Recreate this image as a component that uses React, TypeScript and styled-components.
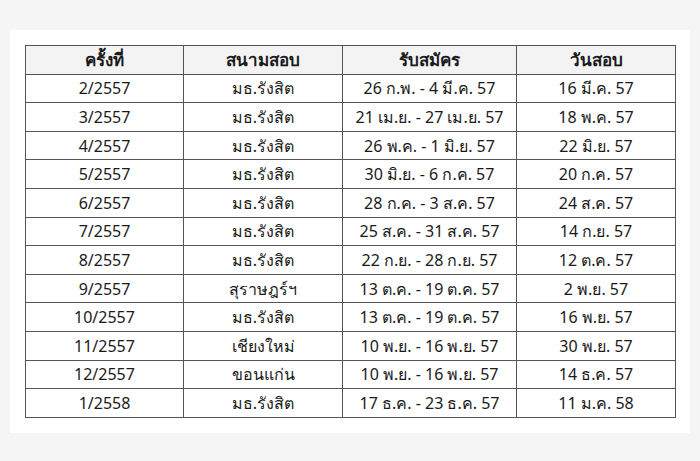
import React from 'react';
import styled, { createGlobalStyle } from 'styled-components';

const GlobalStyle = createGlobalStyle`
  html, body {
    margin: 0;
    padding: 0;
    background: #f5f5f5;
  }
  body {
    font-family: "Noto Sans", "DejaVu Sans", sans-serif;
  }
`;

const rows = [
  ['2/2557', 'มธ.รังสิต', '26 ก.พ. - 4 มี.ค. 57', '16 มี.ค. 57'],
  ['3/2557', 'มธ.รังสิต', '21 เม.ย. - 27 เม.ย. 57', '18 พ.ค. 57'],
  ['4/2557', 'มธ.รังสิต', '26 พ.ค. - 1 มิ.ย. 57', '22 มิ.ย. 57'],
  ['5/2557', 'มธ.รังสิต', '30 มิ.ย. - 6 ก.ค. 57', '20 ก.ค. 57'],
  ['6/2557', 'มธ.รังสิต', '28 ก.ค. - 3 ส.ค. 57', '24 ส.ค. 57'],
  ['7/2557', 'มธ.รังสิต', '25 ส.ค. - 31 ส.ค. 57', '14 ก.ย. 57'],
  ['8/2557', 'มธ.รังสิต', '22 ก.ย. - 28 ก.ย. 57', '12 ต.ค. 57'],
  ['9/2557', 'สุราษฎร์ฯ', '13 ต.ค. - 19 ต.ค. 57', '2 พ.ย. 57'],
  ['10/2557', 'มธ.รังสิต', '13 ต.ค. - 19 ต.ค. 57', '16 พ.ย. 57'],
  ['11/2557', 'เชียงใหม่', '10 พ.ย. - 16 พ.ย. 57', '30 พ.ย. 57'],
  ['12/2557', 'ขอนแก่น', '10 พ.ย. - 16 พ.ย. 57', '14 ธ.ค. 57'],
  ['1/2558', 'มธ.รังสิต', '17 ธ.ค. - 23 ธ.ค. 57', '11 ม.ค. 58'],
];

const headers = ['ครั้งที่', 'สนามสอบ', 'รับสมัคร', 'วันสอบ'];
const colWidths = [158, 159, 174, 159];

export default function App() {
  return (
    <>
      <GlobalStyle />
      <S.Page>
        <S.Panel>
          <S.Table>
            <colgroup>
              {colWidths.map((w, i) => (
                <col key={i} style={{ width: w }} />
              ))}
            </colgroup>
            <thead>
              <tr>
                {headers.map((h) => (
                  <S.Th key={h}>{h}</S.Th>
                ))}
              </tr>
            </thead>
            <tbody>
              {rows.map((row) => (
                <tr key={row[0]}>
                  {row.map((cell, i) => (
                    <S.Td key={i}>{cell}</S.Td>
                  ))}
                </tr>
              ))}
            </tbody>
          </S.Table>
        </S.Panel>
      </S.Page>
    </>
  );
}

const S = {
  Page: styled.div`
    width: 700px;
    height: 461px;
    padding: 30px 10px 0 10px;
    box-sizing: border-box;
  `,
  Panel: styled.div`
    background: #ffffff;
    width: 680px;
    padding: 15px;
    box-sizing: border-box;
  `,
  Table: styled.table`
    width: 650px;
    border-collapse: collapse;
    table-layout: fixed;
    color: #1a1a1a;
    font-size: 16px;
  `,
  Th: styled.th`
    height: 27.6px;
    padding: 0;
    background: #f3f3f3;
    border: 1px solid #555;
    font-size: 17px;
    font-weight: bold;
    text-align: center;
    line-height: 26px;
  `,
  Td: styled.td`
    height: 27.6px;
    padding: 0;
    border: 1px solid #555;
    text-align: center;
    line-height: 26px;
    white-space: nowrap;
  `,
};
